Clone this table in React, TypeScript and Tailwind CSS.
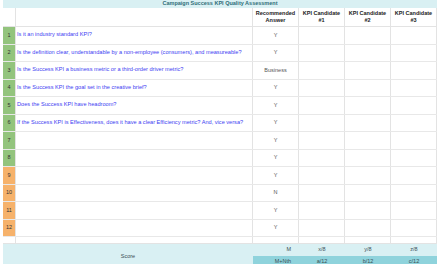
import React from "react";

const rows: { n: number; q: string; a: string; c: string }[] = [
  { n: 1, q: "Is it an industry standard KPI?", a: "Y", c: "bg-[#93c47d]" },
  { n: 2, q: "Is the definition clear, understandable by a non-employee (consumers), and measureable?", a: "Y", c: "bg-[#93c47d]" },
  { n: 3, q: "Is the Success KPI a business metric or a third-order driver metric?", a: "Business", c: "bg-[#93c47d]" },
  { n: 4, q: "Is the Success KPI the goal set in the creative brief?", a: "Y", c: "bg-[#93c47d]" },
  { n: 5, q: "Does the Success KPI have headroom?", a: "Y", c: "bg-[#93c47d]" },
  { n: 6, q: "If the Success KPI is Effectiveness, does it have a clear Efficiency metric? And, vice versa?", a: "Y", c: "bg-[#93c47d]" },
  { n: 7, q: "", a: "Y", c: "bg-[#93c47d]" },
  { n: 8, q: "", a: "Y", c: "bg-[#93c47d]" },
  { n: 9, q: "", a: "Y", c: "bg-[#f6b26b]" },
  { n: 10, q: "", a: "N", c: "bg-[#f6b26b]" },
  { n: 11, q: "", a: "Y", c: "bg-[#f6b26b]" },
  { n: 12, q: "", a: "Y", c: "bg-[#f6b26b]" },
];

export default function App() {
  return (
    <div
      className="w-[440px] h-[264px] overflow-hidden bg-white text-[5.5px] leading-none"
      style={{ fontFamily: '"Liberation Sans", Arial, sans-serif' }}
    >
      <div className="ml-[3px] w-[434px]">
        {/* title */}
        <div className="h-[8px] bg-[#d9f0f3] flex items-center justify-center font-bold text-[#2f6e78]">
          Campaign Success KPI Quality Assessment
        </div>
        {/* header */}
        <div className="h-[19px] flex border-b border-[#e3e3e3] font-bold text-[#222]">
          <div className="w-[13px] border-r border-[#e3e3e3]" />
          <div className="w-[237px] border-r border-[#e3e3e3]" />
          <div className="w-[46px] border-r border-[#e3e3e3] flex items-center justify-center text-center leading-[7px]">
            Recommended<br />Answer
          </div>
          <div className="w-[46px] border-r border-[#e3e3e3] flex items-center justify-center text-center leading-[7px]">
            KPI Candidate<br />#1
          </div>
          <div className="w-[46px] border-r border-[#e3e3e3] flex items-center justify-center text-center leading-[7px]">
            KPI Candidate<br />#2
          </div>
          <div className="w-[46px] border-r border-[#e3e3e3] flex items-center justify-center text-center leading-[7px]">
            KPI Candidate<br />#3
          </div>
        </div>
        {rows.map((r) => (
          <div key={r.n} className="h-[17.5px] flex border-b border-[#e8e8e8]">
            <div className={`w-[13px] ${r.c} border-r border-[#e3e3e3] flex items-center justify-center text-[#333]`}>
              {r.n}
            </div>
            <div className="w-[237px] border-r border-[#e3e3e3] flex items-center pl-[1px] text-[#4141f2] text-[5.62px] whitespace-nowrap">
              {r.q}
            </div>
            <div className="w-[46px] border-r border-[#e3e3e3] flex items-center justify-center text-[#555]">
              {r.a}
            </div>
            <div className="w-[46px] border-r border-[#e3e3e3]" />
            <div className="w-[46px] border-r border-[#e3e3e3]" />
            <div className="w-[46px] border-r border-[#e3e3e3]" />
          </div>
        ))}
        {/* empty row */}
        <div className="h-[7px] flex border-b border-[#e3e3e3]">
          <div className="w-[13px] border-r border-[#e3e3e3]" />
          <div className="w-[237px] border-r border-[#e3e3e3]" />
          <div className="w-[46px] border-r border-[#e3e3e3]" />
          <div className="w-[46px] border-r border-[#e3e3e3]" />
          <div className="w-[46px] border-r border-[#e3e3e3]" />
          <div className="w-[46px] border-r border-[#e3e3e3]" />
        </div>
        {/* score */}
        <div className="flex bg-[#d9f0f3] text-[#3a4f55]">
          <div className="w-[250px] flex items-center justify-center pt-[1px]">Score</div>
          <div className="flex flex-col">
            <div className="h-[12px] flex items-center">
              <div className="w-[46px] text-right pr-[8px]">M</div>
              <div className="w-[46px] text-center">x/8</div>
              <div className="w-[46px] text-center">y/8</div>
              <div className="w-[46px] text-center">z/8</div>
            </div>
            <div className="h-[12px] flex items-center bg-[#8fd3dc]">
              <div className="w-[46px] text-right pr-[8px]">M+Nth</div>
              <div className="w-[46px] text-center">a/12</div>
              <div className="w-[46px] text-center">b/12</div>
              <div className="w-[46px] text-center">c/12</div>
            </div>
          </div>
        </div>
      </div>
    </div>
  );
}
